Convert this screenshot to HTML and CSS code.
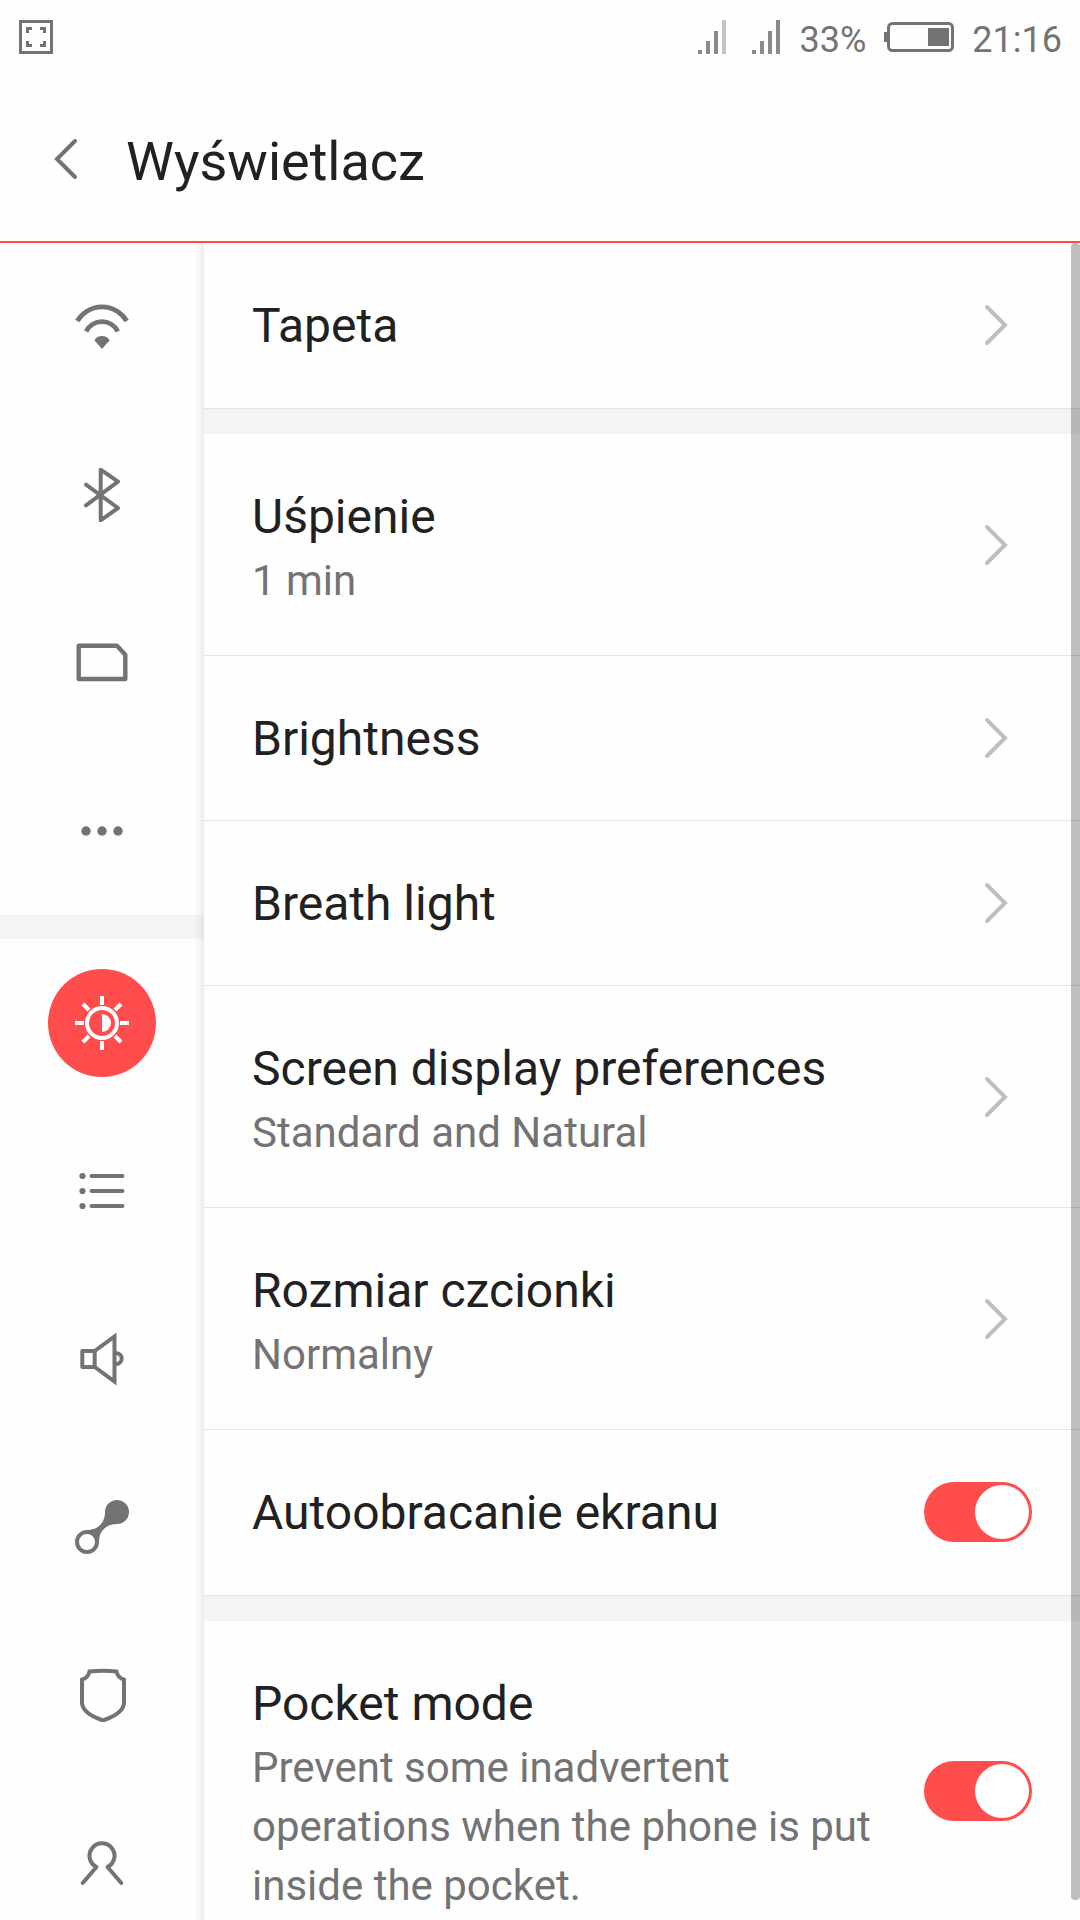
FILE: index.html
```html
<!DOCTYPE html>
<html lang="pl">
<head>
<meta charset="utf-8">
<meta name="viewport" content="width=device-width, initial-scale=1">
<title>Wyświetlacz</title>
<link rel="stylesheet" href="styles.css">
</head>
<body>
<div class="status">
  <svg class="status-shot" viewBox="0 0 34 34" aria-hidden="true"><path d="M1.5 1.5h31v31h-31z" fill="none" stroke="currentColor" stroke-width="3"/><path d="M7 7h6v3h-3v3H7zM27 7h-6v3h3v3h3zM7 27h6v-3h-3v-3H7zM27 27h-6v-3h3v-3h3z" fill="currentColor"/></svg>
  <div class="status-right">
    <div class="signals">
      <svg class="signal" viewBox="0 0 28 34" aria-hidden="true"><path d="M0 30h4v4H0zM8 21h4v13H8zM16 11h4v23h-4z"/><path d="M24 0h4v34h-4z" opacity=".5"/></svg>
      <svg class="signal" viewBox="0 0 28 34" aria-hidden="true"><path d="M0 30h4v4H0zM8 21h4v13H8zM16 11h4v23h-4zM24 0h4v34h-4z"/></svg>
    </div>
    <span class="status-text">33%</span>
    <svg class="battery" viewBox="0 0 70 30" aria-hidden="true"><rect x="4.500" y="1.500" width="64" height="27" rx="4" fill="none" stroke="currentColor" stroke-width="3"/><path d="M0 10h4v10H0zM44 6h21v18H44z" fill="currentColor"/></svg>
    <span class="status-text">21:16</span>
  </div>
</div>
<header class="header">
  <button class="back" aria-label="Wstecz"><svg viewBox="0 0 24 42"><path d="M21 3L3 21l18 18"/></svg></button>
  <h1 class="title">Wyświetlacz</h1>
</header>
<div class="body">
  <nav class="rail" aria-label="Ustawienia">
    <div class="rail-group">
      <a class="rail-item" href="#wifi" aria-label="Wi-Fi"><svg viewBox="0 0 54 54"><path d="M2.300 21A28.600 28.600 0 0 1 51.700 21M11.200 31.500A17.600 17.600 0 0 1 42.800 31.500" stroke-width="4.800"/><path class="solid" d="M19.300 40.300A9 9 0 0 1 34.700 40.300L27 49z"/></svg></a>
      <a class="rail-item" href="#bluetooth" aria-label="Bluetooth"><svg viewBox="0 0 54 54"><path d="M11 16.700L43 40 25.700 52.300V1.700L43 13.700 11 37.300" stroke-linejoin="round" stroke-linecap="round"/></svg></a>
      <a class="rail-item" href="#sim" aria-label="Karty SIM"><svg viewBox="0 0 54 54"><path d="M3.700 9.700H42l8.300 9V43H3.700z" stroke-width="4.400" stroke-linejoin="round"/></svg></a>
      <a class="rail-item" href="#more" aria-label="Więcej"><svg viewBox="0 0 54 54"><g class="solid"><circle cx="11" cy="27" r="4.700"/><circle cx="27" cy="27" r="4.700"/><circle cx="43" cy="27" r="4.700"/></g></svg></a>
    </div>
    <div class="rail-group">
      <a class="rail-item" href="#display" aria-label="Wyświetlacz" aria-current="page"><span class="rail-active"><svg viewBox="0 0 54 54"><circle cx="27" cy="27" r="15"/><path d="M27 0v9M27 45v9M0 27h9M45 27h9M8 8l6 6M46 8l-6 6M8 46l6-6M46 46l-6-6"/><path class="solid" d="M27 18a9 9 0 0 1 0 18z"/></svg></span></a>
      <a class="rail-item" href="#notifications" aria-label="Powiadomienia"><svg viewBox="0 0 54 54"><g class="solid"><circle cx="7.500" cy="12" r="3.100"/><circle cx="7.500" cy="27" r="3.100"/><circle cx="7.500" cy="42" r="3.100"/></g><path d="M16.500 12h31M16.500 27h31M16.500 42h31" stroke-linecap="round"/></svg></a>
      <a class="rail-item" href="#sound" aria-label="Dźwięk"><svg viewBox="0 0 54 54"><path d="M19.700 19H7.300v16h12.400z" stroke-linejoin="round"/><path d="M19.700 19L39.500 4.400v45.200L19.700 35"/><path d="M40 21.200h1.300a5.400 5.400 0 0 1 0 10.800H40"/></svg></a>
      <a class="rail-item" href="#connections" aria-label="Połączenia"><svg viewBox="0 0 54 54"><path class="solid" fill-rule="evenodd" d="M30 12A12 12 0 1 1 42 24C31 24 24 31 24 42A12 12 0 1 1 12 30C23 30 30 23 30 12zM12 34a8 8 0 1 0 0 16a8 8 0 1 0 0-16z"/></svg></a>
      <a class="rail-item" href="#security" aria-label="Bezpieczeństwo"><svg viewBox="0 0 54 54"><path d="M14.500 3.500Q28 1.800 41.500 3.500Q42.500 9.500 49 11.700V34.500C49 43 39.500 48.500 28 52.500C16.500 48.500 7 43 7 34.500V11.700Q13.500 9.500 14.500 3.500z"/></svg></a>
      <a class="rail-item" href="#accounts" aria-label="Konta"><svg viewBox="0 0 54 54"><path d="M7.700 47L21.500 31A12.500 12.500 0 1 1 32.500 31L46.300 47" stroke-linecap="round" stroke-linejoin="round"/></svg></a>
    </div>
  </nav>
  <main class="pane">
    <section class="group">
      <a class="row" href="#wallpaper"><span class="text"><span class="name">Tapeta</span></span><svg class="chevron" viewBox="0 0 24 42"><path d="M3 3l18 18L3 39"/></svg></a>
    </section>
    <section class="group">
      <a class="row" href="#sleep"><span class="text has-summary"><span class="name">Uśpienie</span><span class="summary">1 min</span></span><svg class="chevron" viewBox="0 0 24 42"><path d="M3 3l18 18L3 39"/></svg></a>
      <a class="row" href="#brightness"><span class="text"><span class="name">Brightness</span></span><svg class="chevron" viewBox="0 0 24 42"><path d="M3 3l18 18L3 39"/></svg></a>
      <a class="row" href="#breath"><span class="text"><span class="name">Breath light</span></span><svg class="chevron" viewBox="0 0 24 42"><path d="M3 3l18 18L3 39"/></svg></a>
      <a class="row" href="#preferences"><span class="text has-summary"><span class="name">Screen display preferences</span><span class="summary">Standard and Natural</span></span><svg class="chevron" viewBox="0 0 24 42"><path d="M3 3l18 18L3 39"/></svg></a>
      <a class="row" href="#font-size"><span class="text has-summary"><span class="name">Rozmiar czcionki</span><span class="summary">Normalny</span></span><svg class="chevron" viewBox="0 0 24 42"><path d="M3 3l18 18L3 39"/></svg></a>
      <label class="row" for="rotate"><span class="text"><span class="name">Autoobracanie ekranu</span></span><input class="switch" type="checkbox" id="rotate" checked></label>
    </section>
    <section class="group">
      <label class="row" for="pocket"><span class="text has-summary"><span class="name">Pocket mode</span><span class="summary">Prevent some inadvertent operations when the phone is put inside the pocket.</span></span><input class="switch" type="checkbox" id="pocket" checked></label>
    </section>
  </main>
  <div class="scrollbar"></div>
</div>
</body>
</html>
```
FILE: styles.css
```css
:root {
  --accent: #ff4d4d;
  --ink: #212121;
  --muted: #737373;
  --line: #e4e4e4;
  --band: #f4f4f4;
  --bg: #fefefe;
}

* {
  box-sizing: border-box;
}

body {
  display: flex;
  flex-direction: column;
  height: 100vh;
  margin: 0;
  overflow: hidden;
  background: var(--bg);
  color: var(--ink);
  font-family: Roboto, sans-serif;
}

a {
  color: inherit;
  text-decoration: none;
}

svg {
  display: block;
  flex: none;
}

/* Status bar */
.status {
  display: flex;
  flex: none;
  align-items: center;
  justify-content: space-between;
  height: 74px;
  padding: 0 18px;
  color: var(--muted);
}

.status-shot {
  width: 34px;
  height: 34px;
  margin-left: 1px;
}

.status-right {
  display: flex;
  align-items: center;
  gap: 18px;
}

.signals {
  display: flex;
  gap: 26px;
  margin-right: 2px;
}

.signal {
  width: 28px;
  height: 34px;
  fill: #8a8a8a;
}

.battery {
  width: 70px;
  height: 30px;
}

.status-text {
  padding-top: 6px;
  font-size: 36px;
  line-height: 42px;
}

/* Title bar */
.header {
  display: flex;
  flex: none;
  align-items: center;
  gap: 48px;
  height: 169px;
  padding: 2px 54px 0;
  border-bottom: 2px solid var(--accent);
}

.back {
  padding: 0;
  border: 0;
  background: none;
}

.back svg {
  width: 24px;
  height: 42px;
  fill: none;
  stroke: var(--muted);
  stroke-width: 4;
  stroke-linecap: round;
}

.title {
  margin: 0;
  padding-top: 6px;
  font-size: 54px;
  font-weight: 400;
  line-height: 64px;
}

/* Two columns under the title */
.body {
  position: relative;
  display: flex;
  flex: 1;
  min-height: 0;
}

.rail {
  flex: none;
  width: 204px;
  overflow: hidden;
  background:
    linear-gradient(rgba(0, 0, 0, 0.06), rgba(0, 0, 0, 0.06)) right / 3px 100% no-repeat,
    linear-gradient(to right, transparent, rgba(0, 0, 0, 0.04)) right 3px top / 7px 100% no-repeat;
}

.rail-group + .rail-group {
  border-top: 24px solid rgba(0, 0, 0, 0.04);
}

.rail-item {
  display: flex;
  align-items: center;
  justify-content: center;
  height: 168px;
  color: var(--muted);
}

.rail-item svg {
  width: 54px;
  height: 54px;
  fill: none;
  stroke: currentColor;
  stroke-width: 4;
}

.rail-item .solid {
  fill: currentColor;
  stroke: none;
}

.rail-active {
  display: flex;
  align-items: center;
  justify-content: center;
  width: 108px;
  height: 108px;
  border-radius: 50%;
  background: var(--accent);
  color: #fff;
}

.pane {
  flex: 1;
  min-width: 0;
  overflow: hidden;
}

/* Grey band that closes a group */
.group:not(:last-child)::after {
  display: block;
  height: 25px;
  margin-top: 1px;
  border-top: 1px solid var(--line);
  background: var(--band);
  content: "";
}

.row {
  display: flex;
  align-items: center;
  gap: 48px;
  padding: 0 48px;
}

.row + .row {
  border-top: 1px solid var(--line);
}

.text {
  display: flex;
  flex: 1;
  flex-direction: column;
  gap: 6px;
  min-width: 0;
  padding: 55px 0 53px;
}

.has-summary {
  padding-bottom: 45px;
}

.name {
  font-size: 48px;
  line-height: 56px;
}

.summary {
  color: var(--muted);
  font-size: 42px;
  line-height: 59px;
}

.chevron {
  width: 24px;
  height: 42px;
  margin-right: 24px;
  fill: none;
  stroke: #bfbfbf;
  stroke-width: 4;
  stroke-linecap: round;
}

.switch {
  display: flex;
  flex: none;
  width: 108px;
  height: 60px;
  margin: 0;
  padding: 3px;
  border-radius: 30px;
  background: #d0d0d0;
  appearance: none;
}

.switch::before {
  width: 54px;
  height: 54px;
  border-radius: 50%;
  background: #fff;
  content: "";
}

.switch:checked {
  justify-content: flex-end;
  background: var(--accent);
}

.scrollbar {
  position: absolute;
  top: 0;
  right: 0;
  bottom: 20px;
  width: 9px;
  border-radius: 4px;
  background: rgba(0, 0, 0, 0.25);
}
```
